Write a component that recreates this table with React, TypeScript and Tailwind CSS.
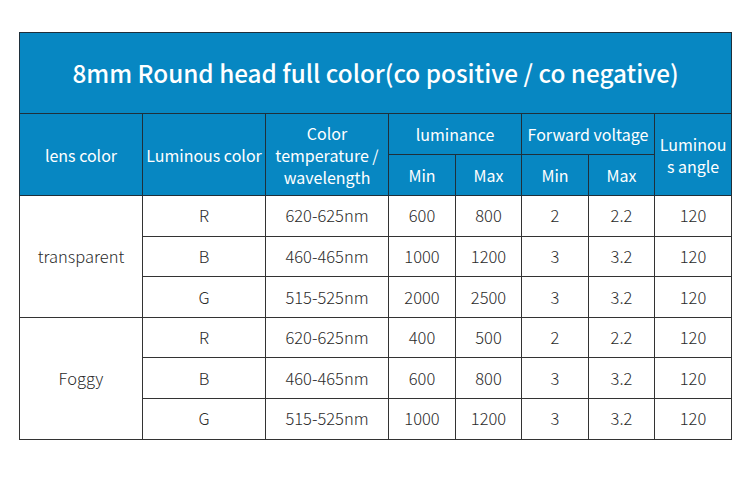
import React from "react";

const rows = [
    ["R", "620-625nm", "600", "800", "2", "2.2", "120"],
    ["B", "460-465nm", "1000", "1200", "3", "3.2", "120"],
    ["G", "515-525nm", "2000", "2500", "3", "3.2", "120"],
    ["R", "620-625nm", "400", "500", "2", "2.2", "120"],
    ["B", "460-465nm", "600", "800", "3", "3.2", "120"],
    ["G", "515-525nm", "1000", "1200", "3", "3.2", "120"],
];

const th = "border border-[#1f2f3a] bg-[#0787c2] text-white font-normal text-[16px] leading-[22px] p-0 text-center align-middle";
const td = "border border-[#333] text-[#2a2a2a] text-[16.5px] font-light p-0 text-center align-middle";

export default function App() {
    return (
        <div className="w-[750px] h-[488px] bg-white pt-[32px] pl-[19px]" style={{fontFamily: '"Noto Sans CJK SC", "Noto Sans", sans-serif'}}>
            <table className="border-collapse table-fixed w-[712px]">
                <colgroup>
                    <col className="w-[123px]"/>
                    <col className="w-[123px]"/>
                    <col className="w-[123px]"/>
                    <col className="w-[67px]"/>
                    <col className="w-[66px]"/>
                    <col className="w-[67px]"/>
                    <col className="w-[66px]"/>
                    <col className="w-[77px]"/>
                </colgroup>
                <thead>
                <tr className="h-[81px]">
                    <th colSpan={8} className={th + " !text-[24.3px] !font-medium"}>
                        8mm Round head full color(co positive / co negative)
                    </th>
                </tr>
                <tr className="h-[41px]">
                    <th rowSpan={2} className={th}>lens color</th>
                    <th rowSpan={2} className={th}>Luminous color</th>
                    <th rowSpan={2} className={th}>Color<br/>temperature /<br/>wavelength</th>
                    <th colSpan={2} className={th}>luminance</th>
                    <th colSpan={2} className={th}>Forward voltage</th>
                    <th rowSpan={2} className={th}>Luminou<br/>s angle</th>
                </tr>
                <tr className="h-[41px]">
                    <th className={th}>Min</th>
                    <th className={th}>Max</th>
                    <th className={th}>Min</th>
                    <th className={th}>Max</th>
                </tr>
                </thead>
                <tbody>
                {rows.map((r, i) => (
                    <tr key={i} className="h-[40.6px]">
                        {i % 3 === 0 && (
                            <td rowSpan={3} className={td}>{i === 0 ? "transparent" : "Foggy"}</td>
                        )}
                        {r.map((c, j) => (
                            <td key={j} className={td}>{c}</td>
                        ))}
                    </tr>
                ))}
                </tbody>
            </table>
        </div>
    );
}
